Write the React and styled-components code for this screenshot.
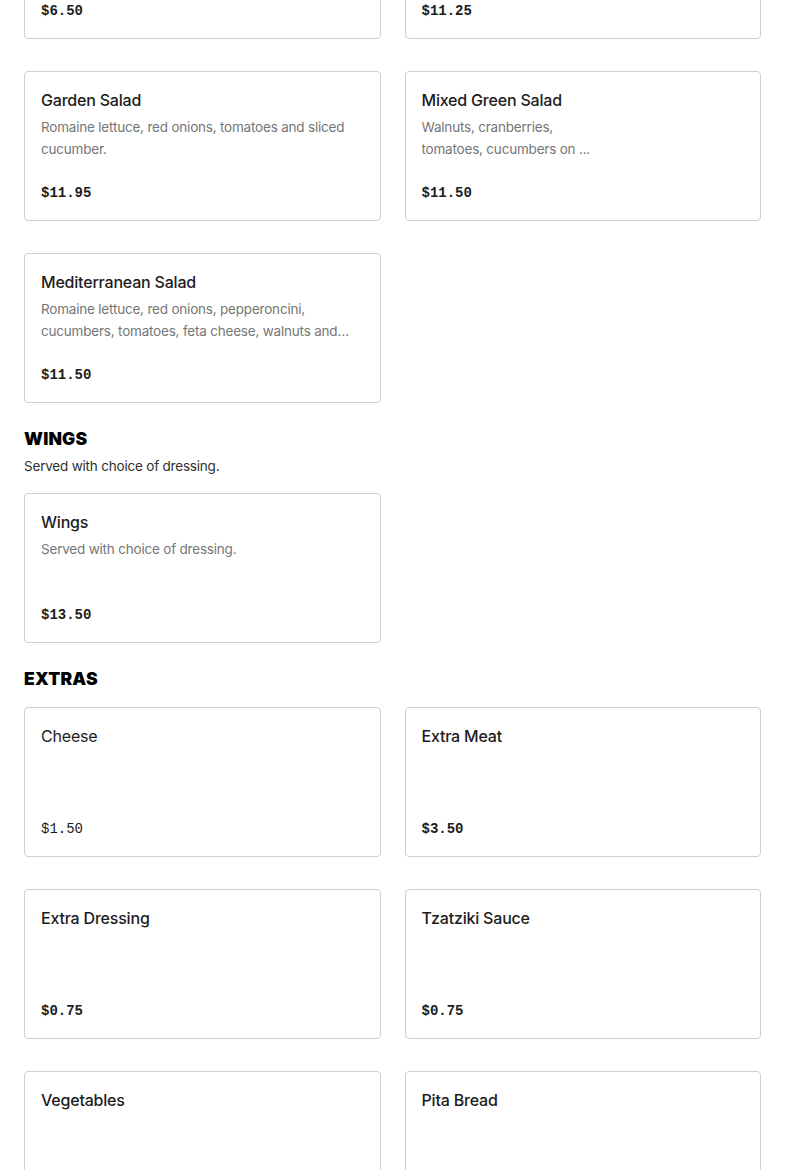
import React from "react";
import styled, { createGlobalStyle } from "styled-components";

const Global = createGlobalStyle`
  html, body { margin: 0; padding: 0; background: #fff; }
  body { font-family: Inter, "Noto Sans", sans-serif; color: #1f1f1f; overflow: hidden; }
`;

const Page = styled.main`
  padding: 0 24px;
  margin-top: -111px;
  display: flex;
  flex-direction: column;
`;

const Section = styled.section`
  display: flex;
  flex-direction: column;
  & + & { margin-top: 24px; }
`;

const Heading = styled.h2`
  margin: 0;
  font-size: 17.5px;
  line-height: 24px;
  font-weight: 900;
  letter-spacing: 0.2px;
  color: #000;
`;

const SectionNote = styled.p`
  margin: 4px 0 0;
  font-size: 13.5px;
  letter-spacing: -0.2px;
  line-height: 22px;
  color: #2f2f2f;
`;

const Grid = styled.div`
  margin-top: ${(p) => (p.$flush ? "0" : "16px")};
  display: grid;
  grid-template-columns: 1fr 1fr;
  column-gap: 24px;
  row-gap: 32px;
`;

const Card = styled.article`
  box-sizing: border-box;
  height: 150px;
  border: 1px solid #cfcfcf;
  border-radius: 4px;
  padding: 16px;
  display: flex;
  flex-direction: column;
  background: #fff;
`;

const Name = styled.h3`
  margin: 0;
  font-size: 16px;
  letter-spacing: -0.2px;
  line-height: 24px;
  font-weight: ${(p) => (p.$light ? 400 : 500)};
  color: #1c1c1c;
`;

const Desc = styled.p`
  margin: 4px 0 0;
  font-size: 13.5px;
  letter-spacing: -0.2px;
  line-height: 22px;
  color: #767676;
  max-width: ${(p) => (p.$narrow ? "186px" : "none")};
  display: -webkit-box;
  -webkit-line-clamp: 2;
  -webkit-box-orient: vertical;
  overflow: hidden;
`;

const Price = styled.span`
  margin-top: auto;
  font-family: "Liberation Mono", "DejaVu Sans Mono", monospace;
  font-size: 14px;
  line-height: 22px;
  font-weight: ${(p) => (p.$light ? 400 : 700)};
  color: #1c1c1c;
`;

const Item = ({ name, desc, price, narrow, light }) => (
  <Card>
    <Name $light={light}>{name}</Name>
    {desc && <Desc $narrow={narrow}>{desc}</Desc>}
    <Price $light={light}>{price}</Price>
  </Card>
);

export default function App() {
  return (
    <>
      <Global />
      <Page>
        <Section>
          <Grid $flush>
            <Item name="Side Salad" price="$6.50" />
            <Item name="Greek Salad" price="$11.25" />
            <Item
              name="Garden Salad"
              desc="Romaine lettuce, red onions, tomatoes and sliced cucumber."
              price="$11.95"
            />
            <Item
              name="Mixed Green Salad"
              desc="Walnuts, cranberries, tomatoes, cucumbers on ..."
              price="$11.50"
              narrow
            />
            <Item
              name="Mediterranean Salad"
              desc="Romaine lettuce, red onions, pepperoncini, cucumbers, tomatoes, feta cheese, walnuts and kalamata olives."
              price="$11.50"
            />
          </Grid>
        </Section>
        <Section>
          <Heading>WINGS</Heading>
          <SectionNote>Served with choice of dressing.</SectionNote>
          <Grid>
            <Item name="Wings" desc="Served with choice of dressing." price="$13.50" />
          </Grid>
        </Section>
        <Section>
          <Heading>EXTRAS</Heading>
          <Grid>
            <Item name="Cheese" price="$1.50" light />
            <Item name="Extra Meat" price="$3.50" />
            <Item name="Extra Dressing" price="$0.75" />
            <Item name="Tzatziki Sauce" price="$0.75" />
            <Item name="Vegetables" price="$1.00" />
            <Item name="Pita Bread" price="$1.00" />
          </Grid>
        </Section>
      </Page>
    </>
  );
}
